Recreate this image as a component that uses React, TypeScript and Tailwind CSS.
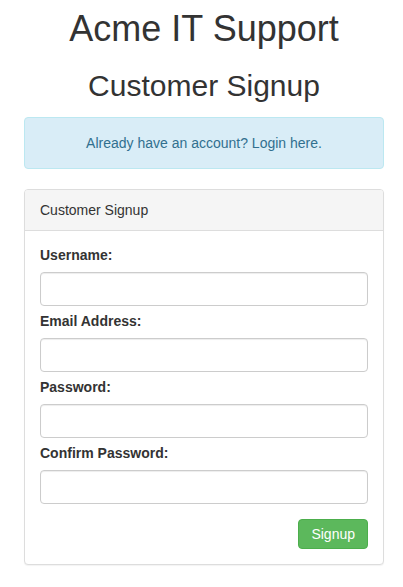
const FIELDS = [
  { id: "username", label: "Username:", type: "text" },
  { id: "email", label: "Email Address:", type: "email" },
  { id: "password", label: "Password:", type: "password" },
  { id: "confirm", label: "Confirm Password:", type: "password" },
];

export default function App() {
  return (
    <div className="min-h-screen bg-white font-['Liberation_Sans',Arial,sans-serif] text-[14px] leading-[20px] text-[#333]">
      <div className="ml-[24px] w-[360px] pb-[20px]">
        <h1 className="mt-[9px] text-center text-[36px] font-normal leading-[39.6px]">
          Acme IT Support
        </h1>
        <h2 className="mt-[20px] text-center text-[30px] font-normal leading-[33px]">
          Customer Signup
        </h2>

        {/* Login notice */}
        <div className="mt-[15px] rounded-[4px] border border-[#bce8f1] bg-[#d9edf7] p-[15px] text-center text-[#31708f]">
          Already have an account? <a href="#">Login here.</a>
        </div>

        {/* Signup panel */}
        <div className="mt-[20px] rounded-[4px] border border-[#ddd] bg-white shadow-[0_1px_1px_rgba(0,0,0,0.05)]">
          <div className="rounded-t-[3px] border-b border-[#ddd] bg-[#f5f5f5] px-[15px] py-[10px]">
            Customer Signup
          </div>
          <form className="px-[15px] pb-[15px] pt-[14px]" onSubmit={(e) => e.preventDefault()}>
            {FIELDS.map((f) => (
              <div key={f.id} className="mb-[5px]">
                <label htmlFor={f.id} className="mb-[7px] block font-bold">
                  {f.label}
                </label>
                <input
                  id={f.id}
                  type={f.type}
                  className="block h-[34px] w-full rounded-[4px] border border-[#ccc] bg-white px-[12px] shadow-[inset_0_1px_1px_rgba(0,0,0,0.075)] outline-none"
                />
              </div>
            ))}
            <div className="mt-[15px] flex justify-end">
              <button
                type="submit"
                className="h-[30px] rounded-[4px] border border-[#4cae4c] bg-[#5cb85c] px-[12px] text-[14px] text-white"
              >
                Signup
              </button>
            </div>
          </form>
        </div>
      </div>
    </div>
  );
}
